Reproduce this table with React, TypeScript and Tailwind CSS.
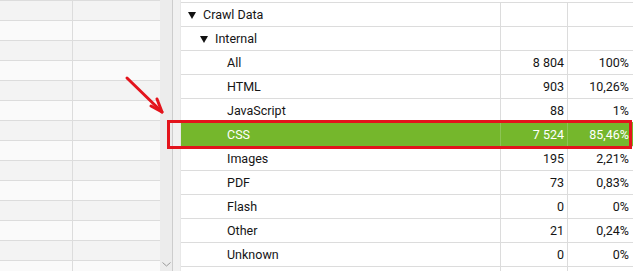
import React from "react";

const leftRows = Array.from({ length: 14 }, (_, i) => i);

type Row = { label: string; level: number; count?: string; pct?: string; open?: boolean; active?: boolean };

const rows: Row[] = [
  { label: "Crawl Data", level: 0, open: true },
  { label: "Internal", level: 1, open: true },
  { label: "All", level: 2, count: "8 804", pct: "100%" },
  { label: "HTML", level: 2, count: "903", pct: "10,26%" },
  { label: "JavaScript", level: 2, count: "88", pct: "1%" },
  { label: "CSS", level: 2, count: "7 524", pct: "85,46%", active: true },
  { label: "Images", level: 2, count: "195", pct: "2,21%" },
  { label: "PDF", level: 2, count: "73", pct: "0,83%" },
  { label: "Flash", level: 2, count: "0", pct: "0%" },
  { label: "Other", level: 2, count: "21", pct: "0,24%" },
  { label: "Unknown", level: 2, count: "0", pct: "0%" },
];

const Caret = () => (
  <svg width="8" height="7" viewBox="0 0 8 7" className="mr-[7px] shrink-0">
    <polygon points="0,0 8,0 4,7" fill="#111" />
  </svg>
);

export default function App() {
  return (
    <div
      className="relative flex w-[633px] h-[271px] overflow-hidden bg-white text-[12.5px] text-[#151515]"
      style={{ fontFamily: "Roboto, 'Liberation Sans', sans-serif" }}
    >
      {/* left table */}
      <div className="w-[160px] shrink-0 flex flex-col">
        {leftRows.map((i) => (
          <div
            key={i}
            className={`h-[20px] shrink-0 grid grid-cols-[73px_1fr] border-t border-[#dcdcdc] ${
              i % 2 === 0 ? "bg-[#f3f3f3]" : "bg-[#fafafa]"
            }`}
          >
            <div className="border-r border-[#dcdcdc]" />
            <div />
          </div>
        ))}
      </div>

      {/* scrollbar */}
      <div className="relative w-[13px] shrink-0 bg-[#ececec] border-r border-[#cdcdcd]">
        <svg width="9" height="5" viewBox="0 0 9 5" className="absolute left-[2px] bottom-[4px]">
          <polyline points="0.5,0.5 4.5,4 8.5,0.5" fill="none" stroke="#9a9a9a" strokeWidth="1" />
        </svg>
      </div>
      <div className="w-[7px] shrink-0 bg-[#f1f1f1]" />

      {/* right tree table */}
      <div className="flex-1 flex flex-col pt-[2px] border-l border-[#e8e8e8]">
        {rows.map((r) => (
          <div
            key={r.label}
            className={`h-[24px] shrink-0 grid grid-cols-[319px_67px_1fr] border-t ${
              r.active ? "bg-[#75b72c] text-white border-[#75b72c]" : "border-[#dcdcdc]"
            }`}
          >
            <div
              className={`flex items-center pt-[2px] ${
                r.level === 0 ? "pl-[7px]" : r.level === 1 ? "pl-[19px]" : "pl-[46px]"
              }`}
            >
              {r.open && <Caret />}
              <span>{r.label}</span>
            </div>
            <div
              className={`flex items-center justify-end pt-[2px] pr-[3px] border-l ${
                r.active ? "border-[#8cc455]" : "border-[#dcdcdc]"
              }`}
            >
              {r.count}
            </div>
            <div
              className={`flex items-center justify-end pt-[2px] pr-[4px] border-l ${
                r.active ? "border-[#8cc455]" : "border-[#dcdcdc]"
              }`}
            >
              {r.pct}
            </div>
          </div>
        ))}
        <div className="border-t border-[#dcdcdc] flex-1 grid grid-cols-[319px_67px_1fr]">
          <div />
          <div className="border-l border-[#dcdcdc]" />
          <div className="border-l border-[#dcdcdc]" />
        </div>
      </div>

      {/* highlight box */}
      <div className="absolute left-[167px] top-[120px] w-[465px] h-[29px] border-[3px] border-[#e3141c] pointer-events-none" />

      {/* annotation arrow */}
      <svg width="633" height="271" className="absolute left-0 top-0 pointer-events-none">
        <g stroke="#e3141c" strokeWidth="3" strokeLinecap="round" fill="none">
          <line x1="127" y1="78" x2="161" y2="111" />
          <line x1="162" y1="112" x2="151" y2="106" />
          <line x1="162" y1="112" x2="157" y2="99" />
        </g>
      </svg>
    </div>
  );
}
